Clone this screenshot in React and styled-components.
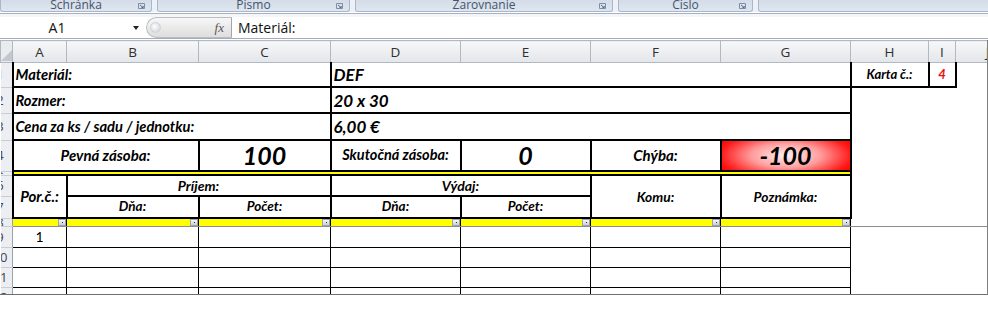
import React from "react"
import styled, { createGlobalStyle } from "styled-components"

const GlobalStyle = createGlobalStyle`
  html, body { margin: 0; padding: 0; background: #fff; }
  body { width: 988px; height: 311px; overflow: hidden; font-family: "Open Sans", "Liberation Sans", sans-serif; }
`

const cellFont = `Lato, "Open Sans", "Liberation Sans", sans-serif`
const line = (w, c = "#000") => (w ? `${w}px solid ${c}` : "none")

// ribbon
const Ribbon = styled.div`
  display: flex;
  gap: 5px;
  height: 12px;
  background: #edf1f7;
  overflow: hidden;
`

const Group = styled.div`
  flex: none;
  width: ${p => p.$w}px;
  display: flex;
  align-items: flex-end;
  justify-content: center;
  position: relative;
  box-sizing: border-box;
  background: linear-gradient(#d3dce8, #dfe6ef);
  border: 1px solid #a8b7ca;
  border-top: none;
  border-radius: 0 0 3px 3px;
  font-size: 12px;
  line-height: 12px;
  color: #45546a;
`

const Launcher = styled.svg`
  position: absolute;
  right: 6px;
  bottom: 2px;
`

const RibbonEdge = styled.div`
  height: 5px;
  background: linear-gradient(#fff 0 1px, #a6b2c2 1px 2px, #f3f5f8 2px);
`

// formula bar
const FormulaBar = styled.div`
  display: flex;
  align-items: stretch;
  height: 21px;
  border-bottom: 1px solid #a5acb5;
  background: #fff;
`

const NameBox = styled.div`
  flex: none;
  width: 146px;
  display: flex;
  align-items: center;
  font-size: 14px;
  color: #111;
`

const NameText = styled.span`
  flex: 1;
  text-align: center;
  padding-right: 19px;
`

const Arrow = styled.span`
  width: 0;
  height: 0;
  border-left: 3px solid transparent;
  border-right: 3px solid transparent;
  border-top: 4px solid #222;
  margin-right: 7px;
`

const Capsule = styled.div`
  flex: none;
  width: 86px;
  box-sizing: border-box;
  display: flex;
  align-items: center;
  justify-content: space-between;
  padding: 0 7px 0 3px;
  background: linear-gradient(#f7f7f7, #dedede);
  border: 1px solid #b9bdc2;
  border-right-color: #9fa5ad;
  border-radius: 11px 0 0 11px;
`

const Knob = styled.span`
  width: 9px;
  height: 9px;
  border-radius: 50%;
  background: radial-gradient(circle at 40% 40%, #fff, #c8cdd3);
  border: 1px solid #cfd3d8;
`

const Fx = styled.span`
  font: italic 13px "Liberation Serif", serif;
  color: #555;
`

const FormulaInput = styled.div`
  flex: 1;
  display: flex;
  align-items: center;
  padding-left: 6px;
  font-size: 14px;
  color: #111;
`

const Gap = styled.div`
  height: 1px;
  background: #fff;
`

// sheet
const SheetView = styled.div`
  width: 987px;
  height: 254px;
  overflow: hidden;
  border-right: 1px solid #7f7f7f;
  border-bottom: 1px solid #6f6f6f;
`

const Sheet = styled.table`
  border-collapse: collapse;
  table-layout: fixed;
  width: 1019px;
`

const Tr = styled.tr`
  & > td { height: ${p => p.$h}px; }
`

const ColHead = styled.td`
  padding: 0;
  border: 1px solid #b2b8c0;
  border-left: none;
  background: linear-gradient(#f6f7f8, #e3e6ea);
  text-align: center;
  font-size: 13.5px;
  color: #2f2f2f;
`

const Corner = styled.td`
  padding: 0;
  border: 1px solid #b2b8c0;
  background: #e9ecef;
  overflow: hidden;
`

const CornerMark = styled.div`
  margin-left: auto;
  margin-top: 8px;
  width: 0;
  height: 0;
  border-left: 11px solid transparent;
  border-bottom: 11px solid #c3c8ce;
`

const RowHead = styled.td`
  padding: 0;
  border-right: 1px solid #9aa2ad;
  border-bottom: 1px solid #c9ced5;
  background: #eceef1;
  overflow: hidden;
`

const RowClip = styled.div`
  width: 12px;
  height: ${p => p.$h}px;
  overflow: hidden;
`

const RowNum = styled.div`
  width: 26px;
  margin-left: -13.5px;
  text-align: center;
  font-size: 13px;
  line-height: ${p => p.$h}px;
  color: #3d4656;
`

const Cell = styled.td`
  padding: 0 2px;
  border-top: ${p => line(p.$t)};
  border-right: ${p => line(p.$r)};
  border-bottom: ${p => line(p.$b, p.$bc || "#000")};
  border-left: ${p => line(p.$l)};
  background: ${p => p.$bg || "transparent"};
  text-align: ${p => p.$align || "left"};
  vertical-align: middle;
  font-family: ${cellFont};
  font-style: ${p => (p.$plain ? "normal" : "italic")};
  font-weight: ${p => (p.$plain ? 400 : 700)};
  font-size: ${p => p.$size || 14.7}px;
  line-height: 1;
  color: ${p => p.$color || "#000"};
  white-space: nowrap;
  overflow: hidden;
`

const Alarm = styled(Cell)`
  background: radial-gradient(ellipse 60% 95% at 50% 50%, #fff2f2 0%, #ff9c9c 45%, #ff1a1a 85%, #f00 100%);
`

const FilterRow = styled.div`
  display: flex;
  justify-content: flex-end;
  height: 7px;
`

const FilterBtn = styled.span`
  width: 8px;
  height: 7px;
  margin-right: -2px;
  box-sizing: border-box;
  border: 1px solid #9da4ad;
  background: linear-gradient(#f5f6f7, #c9ced4);
  display: flex;
  align-items: center;
  justify-content: center;
  &::after {
    content: "";
    width: 1px;
    height: 1px;
    background: #333;
  }
`

const groups = [
  { w: 152, label: "Schránka" },
  { w: 193, label: "Písmo" },
  { w: 258, label: "Zarovnanie" },
  { w: 135, label: "Číslo" },
  { w: 240, label: "" },
]

const widths = [12, 54, 132, 132, 130, 130, 130, 130, 78, 27, 64]
const letters = ["A", "B", "C", "D", "E", "F", "G", "H", "I", "J"]

function RH({ n, h }) {
  return (
    <RowHead>
      <RowClip $h={h}>
        <RowNum $h={h}>{n}</RowNum>
      </RowClip>
    </RowHead>
  )
}

function LauncherIcon() {
  return (
    <Launcher width="7" height="6" viewBox="0 0 7 6">
      <path d="M0.5 0.5h6v5h-6z" fill="none" stroke="#7d8ea6" />
      <path d="M2 2l3 2.5M3.5 4.5h1.8V3" fill="none" stroke="#4d6283" strokeWidth="0.9" />
    </Launcher>
  )
}

function Filter() {
  return (
    <FilterRow>
      <FilterBtn />
    </FilterRow>
  )
}

export default function App() {
  const dataRows = [9, 10, 11, 12]
  return (
    <>
      <GlobalStyle />
      <Ribbon>
        {groups.map((g, i) => (
          <Group key={i} $w={g.w}>
            {g.label}
            {g.label && <LauncherIcon />}
          </Group>
        ))}
      </Ribbon>
      <RibbonEdge />
      <FormulaBar>
        <NameBox>
          <NameText>A1</NameText>
          <Arrow />
        </NameBox>
        <Capsule>
          <Knob />
          <Fx>fx</Fx>
        </Capsule>
        <FormulaInput>Materiál:</FormulaInput>
      </FormulaBar>
      <Gap />
      <SheetView>
        <Sheet>
          <colgroup>
            {widths.map((w, i) => (
              <col key={i} style={{ width: w }} />
            ))}
          </colgroup>
          <tbody>
            <Tr $h={21}>
              <Corner>
                <CornerMark />
              </Corner>
              {letters.map(l => (
                <ColHead key={l}>{l}</ColHead>
              ))}
            </Tr>
            <Tr $h={23}>
              <RH n={1} h={23} />
              <Cell colSpan={3} $l={2} $r={2} $b={2}>Materiál:</Cell>
              <Cell colSpan={4} $r={2} $b={2} $size={17}>DEF</Cell>
              <Cell $l={2} $r={2} $b={2} $align="center" $size={13}>Karta č.:</Cell>
              <Cell $r={2} $b={2} $align="center" $size={13} $color="#e81010">4</Cell>
              <Cell />
            </Tr>
            <Tr $h={24}>
              <RH n={2} h={24} />
              <Cell colSpan={3} $l={2} $r={2} $b={2}>Rozmer:</Cell>
              <Cell colSpan={4} $r={2} $b={2} $size={17}>20 x 30</Cell>
              <Cell $l={2} />
              <Cell />
              <Cell />
            </Tr>
            <Tr $h={25}>
              <RH n={3} h={25} />
              <Cell colSpan={3} $l={2} $r={2} $b={2}>Cena za ks / sadu / jednotku:</Cell>
              <Cell colSpan={4} $r={2} $b={2} $size={17}>6,00 €</Cell>
              <Cell $l={2} />
              <Cell />
              <Cell />
            </Tr>
            <Tr $h={29}>
              <RH n={4} h={29} />
              <Cell colSpan={2} $l={2} $r={2} $b={2} $align="center" $size={15}>Pevná zásoba:</Cell>
              <Cell $r={2} $b={2} $align="center" $size={25}>100</Cell>
              <Cell $r={2} $b={2} $align="center" $size={14.5}>Skutočná zásoba:</Cell>
              <Cell $r={2} $b={2} $align="center" $size={25}>0</Cell>
              <Cell $r={2} $b={2} $align="center" $size={15}>Chýba:</Cell>
              <Alarm $r={2} $b={2} $align="center" $size={25}>-100</Alarm>
              <Cell $l={2} />
              <Cell />
              <Cell />
            </Tr>
            <Tr $h={2}>
              <RH n={5} h={2} />
              <Cell colSpan={7} $l={2} $r={2} $t={2} $b={2} $bg="#ffff00" />
              <Cell />
              <Cell />
              <Cell />
            </Tr>
            <Tr $h={19}>
              <RH n={6} h={19} />
              <Cell rowSpan={2} $l={2} $r={2} $t={2} $b={2} $align="center" $size={15}>Por.č.:</Cell>
              <Cell colSpan={2} $r={2} $t={2} $b={2} $align="center" $size={14}>Príjem:</Cell>
              <Cell colSpan={2} $r={2} $t={2} $b={2} $align="center" $size={14}>Výdaj:</Cell>
              <Cell rowSpan={2} $r={2} $t={2} $b={2} $align="center" $size={13.8}>Komu:</Cell>
              <Cell rowSpan={2} $r={2} $t={2} $b={2} $align="center" $size={13.8}>Poznámka:</Cell>
              <Cell />
              <Cell />
              <Cell />
            </Tr>
            <Tr $h={20}>
              <RH n={7} h={20} />
              <Cell $r={2} $b={2} $align="center" $size={13.5}>Dňa:</Cell>
              <Cell $r={2} $b={2} $align="center" $size={13.5}>Počet:</Cell>
              <Cell $r={2} $b={2} $align="center" $size={13.5}>Dňa:</Cell>
              <Cell $r={2} $b={2} $align="center" $size={13.5}>Počet:</Cell>
              <Cell />
              <Cell />
              <Cell />
            </Tr>
            <Tr $h={7}>
              <RH n={8} h={7} />
              {[0, 1, 2, 3, 4, 5, 6].map(i => (
                <Cell key={i} $r={1} $b={1} $bc="#8c8c8c" $bg="#ffff00">
                  <Filter />
                </Cell>
              ))}
              <Cell $b={1} $bc="#8c8c8c" />
              <Cell $b={1} $bc="#8c8c8c" />
              <Cell $b={1} $bc="#8c8c8c" />
            </Tr>
            {dataRows.map(n => (
              <Tr key={n} $h={n === 9 ? 20 : 19}>
                <RH n={n} h={n === 9 ? 20 : 19} />
                <Cell $r={1} $b={1} $align="center" $plain $size={14}>{n === 9 ? "1" : ""}</Cell>
                {[0, 1, 2, 3, 4, 5].map(i => (
                  <Cell key={i} $r={1} $b={1} />
                ))}
                <Cell />
                <Cell />
                <Cell />
              </Tr>
            ))}
          </tbody>
        </Sheet>
      </SheetView>
    </>
  )
}
